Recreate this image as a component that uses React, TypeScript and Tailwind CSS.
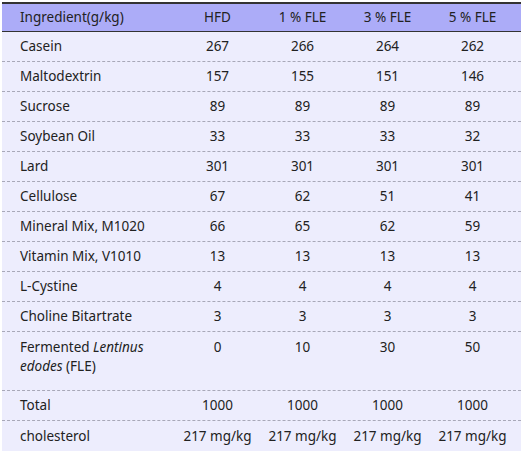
const rows: { name: React.ReactNode; vals: string[]; tall?: boolean }[] = [
  { name: "Casein", vals: ["267", "266", "264", "262"] },
  { name: "Maltodextrin", vals: ["157", "155", "151", "146"] },
  { name: "Sucrose", vals: ["89", "89", "89", "89"] },
  { name: "Soybean Oil", vals: ["33", "33", "33", "32"] },
  { name: "Lard", vals: ["301", "301", "301", "301"] },
  { name: "Cellulose", vals: ["67", "62", "51", "41"] },
  { name: "Mineral Mix, M1020", vals: ["66", "65", "62", "59"] },
  { name: "Vitamin Mix, V1010", vals: ["13", "13", "13", "13"] },
  { name: "L-Cystine", vals: ["4", "4", "4", "4"] },
  { name: "Choline Bitartrate", vals: ["3", "3", "3", "3"] },
  {
    name: (
      <>
        Fermented <em>Lentinus</em>
        <br />
        <em>edodes</em> (FLE)
      </>
    ),
    vals: ["0", "10", "30", "50"],
    tall: true,
  },
  { name: "Total", vals: ["1000", "1000", "1000", "1000"] },
  { name: "cholesterol", vals: ["217 mg/kg", "217 mg/kg", "217 mg/kg", "217 mg/kg"] },
];

const cols = ["HFD", "1 % FLE", "3 % FLE", "5 % FLE"];

export default function App() {
  return (
    <div className="w-[524px] h-[451px] bg-white pt-[2px] pl-[2px] pr-[3px] font-['Noto_Sans',sans-serif] text-[13.5px] text-[#222]">
      <div className="border-t-2 border-b-2 border-[#333] bg-[#ededfd]">
        {/* header */}
        <div className="flex h-[28px] items-center bg-[#acacf8] border-b border-[#333]">
          <div className="w-[173px] pl-[18px]">Ingredient(g/kg)</div>
          {cols.map((c) => (
            <div key={c} className="w-[85px] text-center">
              {c}
            </div>
          ))}
        </div>

        {rows.map((r, i) => (
          <div
            key={i}
            className={
              "flex " +
              (r.tall ? "h-[59px] items-start pt-[6px] " : "h-[30px] items-center ") +
              (i < rows.length - 1 ? "border-b border-dashed border-[#a8a8b8]" : "")
            }
          >
            <div className="w-[173px] pl-[18px] leading-[19px]">{r.name}</div>
            {r.vals.map((v, j) => (
              <div key={j} className="w-[85px] text-center whitespace-nowrap leading-[19px]">
                {v}
              </div>
            ))}
          </div>
        ))}
      </div>
    </div>
  );
}
